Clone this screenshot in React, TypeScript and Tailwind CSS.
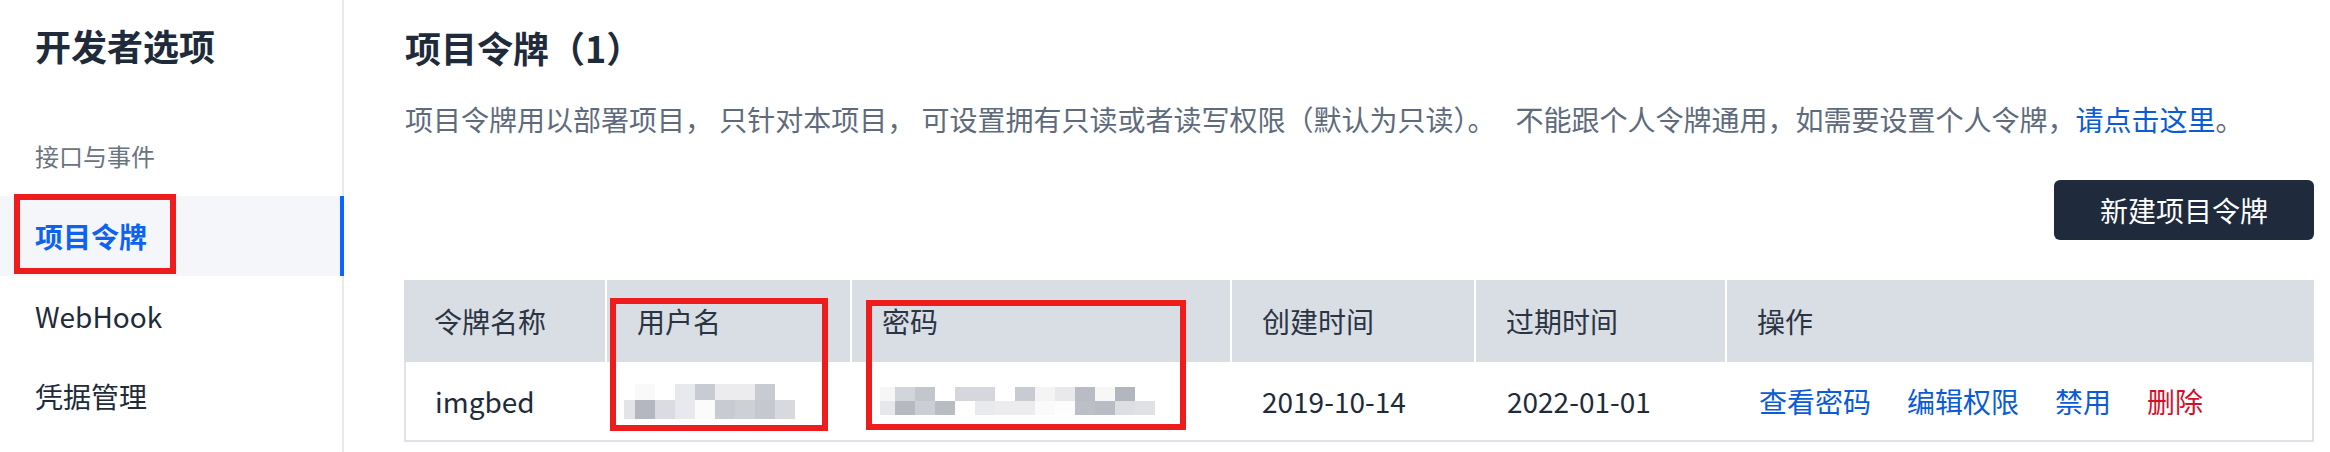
import React from "react";

const FONT = { fontFamily: '"Noto Sans CJK SC", "Noto Sans", sans-serif' };

type Block = { w: string; c: string };

const userRow1: Block[] = [
  { w: "w-[11px]", c: "bg-transparent" },
  { w: "w-[20px]", c: "bg-[#f9f9fa]" },
  { w: "w-[20px]", c: "bg-transparent" },
  { w: "w-[20px]", c: "bg-[#e8e9ec]" },
  { w: "w-[20px]", c: "bg-[#c8cbd2]" },
  { w: "w-[20px]", c: "bg-[#ececef]" },
  { w: "w-[20px]", c: "bg-[#ececef]" },
  { w: "w-[20px]", c: "bg-[#c8cbd2]" },
];
const userRow2: Block[] = [
  { w: "w-[11px]", c: "bg-[#e3e4e8]" },
  { w: "w-[20px]", c: "bg-[#b4b7c0]" },
  { w: "w-[20px]", c: "bg-[#dbdce1]" },
  { w: "w-[20px]", c: "bg-[#e8e9ec]" },
  { w: "w-[20px]", c: "bg-[#fbfbfc]" },
  { w: "w-[20px]", c: "bg-[#c8cbd1]" },
  { w: "w-[20px]", c: "bg-[#cdd0d5]" },
  { w: "w-[20px]", c: "bg-[#c5c8cf]" },
  { w: "w-[20px]", c: "bg-[#d7d9de]" },
];
const passRow1: Block[] = [
  { w: "w-[15px]", c: "bg-[#f6f6f7]" },
  { w: "w-[20px]", c: "bg-[#d2d5da]" },
  { w: "w-[20px]", c: "bg-[#c3c6cc]" },
  { w: "w-[20px]", c: "bg-transparent" },
  { w: "w-[20px]", c: "bg-[#d5d7dc]" },
  { w: "w-[20px]", c: "bg-[#d5d7dc]" },
  { w: "w-[20px]", c: "bg-transparent" },
  { w: "w-[20px]", c: "bg-[#c8cbd2]" },
  { w: "w-[20px]", c: "bg-[#f4f4f5]" },
  { w: "w-[20px]", c: "bg-[#e9e9ec]" },
  { w: "w-[20px]", c: "bg-[#b9bcc4]" },
  { w: "w-[20px]", c: "bg-[#f6f7f6]" },
  { w: "w-[20px]", c: "bg-[#b3b6bf]" },
];
const passRow2: Block[] = [
  { w: "w-[15px]", c: "bg-[#e6e7ea]" },
  { w: "w-[20px]", c: "bg-[#b6b9c1]" },
  { w: "w-[20px]", c: "bg-[#cbced4]" },
  { w: "w-[20px]", c: "bg-[#b9bcc3]" },
  { w: "w-[20px]", c: "bg-transparent" },
  { w: "w-[20px]", c: "bg-[#e9eaed]" },
  { w: "w-[20px]", c: "bg-[#ececef]" },
  { w: "w-[20px]", c: "bg-[#ececef]" },
  { w: "w-[20px]", c: "bg-[#fafafa]" },
  { w: "w-[20px]", c: "bg-[#fdfdfd]" },
  { w: "w-[20px]", c: "bg-[#bcbfc6]" },
  { w: "w-[20px]", c: "bg-[#b9bcc4]" },
  { w: "w-[20px]", c: "bg-[#dddee2]" },
  { w: "w-[20px]", c: "bg-[#e0e1e5]" },
];

function MosaicRow({ blocks, h }: { blocks: Block[]; h: string }) {
  return (
    <div className={`flex ${h}`}>
      {blocks.map((b, i) => (
        <div key={i} className={`${b.w} ${b.c} h-full`} />
      ))}
    </div>
  );
}

const headers = ["令牌名称", "用户名", "密码", "创建时间", "过期时间", "操作"];

export default function App() {
  return (
    <div className="relative flex h-[452px] w-full bg-white overflow-hidden" style={FONT}>
      {/* Sidebar */}
      <aside className="relative w-[344px] shrink-0 border-r-2 border-[#e8e9ec]">
        <div className="pl-[35px] pt-[19px] text-[36px] leading-[52px] font-bold text-[#1f2a3a]">
          开发者选项
        </div>
        <div className="pl-[35px] mt-[67px] text-[24px] leading-[36px] text-[#6b7380]">
          接口与事件
        </div>
        <nav className="mt-[22px] flex flex-col">
          <div className="-mr-[2px] flex h-[80px] items-center bg-[#f4f6fa] border-r-4 border-[#0a64ff] pl-[35px] text-[28px] font-semibold text-[#0b63f0]">
            项目令牌
          </div>
          <div className="flex h-[80px] items-center pl-[35px] text-[28px] text-[#1f2a3a]">
            WebHook
          </div>
          <div className="flex h-[80px] items-center pl-[35px] text-[28px] text-[#1f2a3a]">
            凭据管理
          </div>
        </nav>
        <div className="absolute left-[14px] top-[194px] h-[80px] w-[162px] border-[6px] border-[#ee1c1c]" />
      </aside>

      {/* Main */}
      <main className="flex-1 pl-[60px] pr-[16px]">
        <h1 className="pt-[21px] pl-[1px] text-[36px] leading-[52px] font-bold text-[#1f2a3a]">
          项目令牌（1）
        </h1>
        <p className="mt-[26px] pl-[1px] text-[28px] leading-[40px] text-[#5f6b7c] whitespace-nowrap">
          项目令牌用以部署项目， 只针对本项目， 可设置拥有只读或者读写权限（默认为只读）。
          <span className="ml-[20px]">不能跟个人令牌通用，如需要设置个人令牌，</span>
          <span className="text-[#0b5bd6]">请点击这里</span>。
        </p>
        <div className="mt-[41px] flex justify-end">
          <button className="h-[60px] w-[260px] rounded-[6px] bg-[#1f2a3d] text-[28px] text-white">
            新建项目令牌
          </button>
        </div>

        {/* Table */}
        <div className="mt-[40px] w-full">
          <div className="grid grid-cols-[201px_245px_380px_244px_251px_1fr] h-[82px] bg-[#d9dde4]">
            {headers.map((h, i) => (
              <div
                key={h}
                className={`flex items-center pl-[30px] text-[28px] text-[#2b3443] ${i > 0 ? "border-l-2 border-white" : ""}`}
              >
                {h}
              </div>
            ))}
          </div>
          <div className="grid grid-cols-[201px_245px_380px_244px_251px_1fr] h-[80px] border-x-2 border-b-2 border-[#dfe2e8] text-[28px] text-[#1f2a3a]">
            <div className="flex items-center pl-[29px]">imgbed</div>
            <div className="flex items-center pl-[17px]">
              <div className="flex flex-col">
                <MosaicRow blocks={userRow1} h="h-[16px]" />
                <MosaicRow blocks={userRow2} h="h-[19px]" />
              </div>
            </div>
            <div className="flex items-center pl-[28px]">
              <div className="flex flex-col">
                <MosaicRow blocks={passRow1} h="h-[14px]" />
                <MosaicRow blocks={passRow2} h="h-[14px]" />
              </div>
            </div>
            <div className="flex items-center pl-[30px]">2019-10-14</div>
            <div className="flex items-center pl-[31px]">2022-01-01</div>
            <div className="flex items-center gap-[36px] pl-[32px]">
              <span className="text-[#0b5bd6]">查看密码</span>
              <span className="text-[#0b5bd6]">编辑权限</span>
              <span className="text-[#0b5bd6]">禁用</span>
              <span className="text-[#d3102a]">删除</span>
            </div>
          </div>
        </div>
      </main>

      {/* Annotation overlays */}
      <div className="absolute left-[610px] top-[298px] h-[133px] w-[218px] border-[6px] border-[#ee1c1c]" />
      <div className="absolute left-[866px] top-[300px] h-[130px] w-[320px] border-[6px] border-[#ee1c1c]" />
    </div>
  );
}
